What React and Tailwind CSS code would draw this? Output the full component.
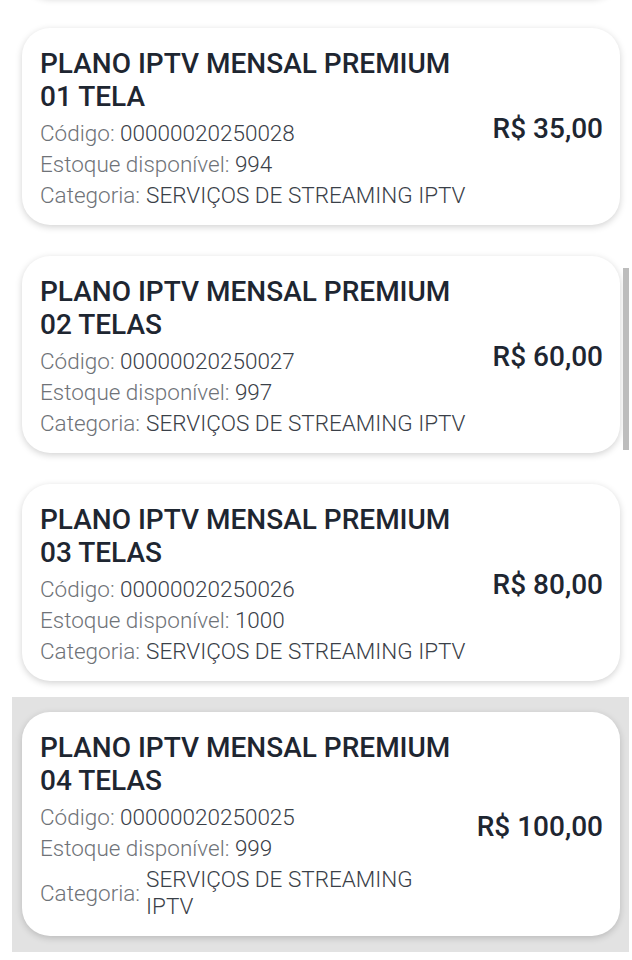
import React from "react";

const planos = [
  { tela: "01 TELA", codigo: "00000020250028", estoque: 994, preco: "R$ 35,00" },
  { tela: "02 TELAS", codigo: "00000020250027", estoque: 997, preco: "R$ 60,00" },
  { tela: "03 TELAS", codigo: "00000020250026", estoque: 1000, preco: "R$ 80,00" },
  { tela: "04 TELAS", codigo: "00000020250025", estoque: 999, preco: "R$ 100,00", ativo: true },
];

function PlanoCard({ plano }) {
  return (
    <div
      className={
        "ml-[12px] mr-[3px] pl-[10px] pr-[9px] pt-[15px] pb-[16px] " +
        (plano.ativo ? "bg-[#e2e2e2]" : "bg-white")
      }
    >
      <div className="flex items-center gap-6 rounded-[28px] bg-white pl-[18px] pr-[17px] pt-[19px] pb-[14px] shadow-[0_2px_7px_rgba(0,0,0,0.18)]">
        <div className="min-w-0 flex-1">
          <h2 className="text-[28px] font-medium leading-[33px] text-[#1e2631]">
            PLANO IPTV MENSAL PREMIUM
            <br />
            {plano.tela}
          </h2>
          <div className="mt-[5px] text-[22.5px] font-light leading-[31px]">
            <p>
              <span className="text-[#6f7378]">Código: </span>
              <span className="text-[#3a4048]">{plano.codigo}</span>
            </p>
            <p>
              <span className="text-[#6f7378]">Estoque disponível: </span>
              <span className="text-[#3a4048]">{plano.estoque}</span>
            </p>
            <div className="flex items-center">
              <span className="shrink-0 text-[#6f7378]">Categoria:</span>
              <span className="ml-[6px] py-[2px] leading-[27px] text-[#3a4048]">
                SERVIÇOS DE STREAMING IPTV
              </span>
            </div>
          </div>
        </div>
        <div className="shrink-0 text-[28px] font-medium text-[#1e2631]">{plano.preco}</div>
      </div>
    </div>
  );
}

export default function App() {
  return (
    <div className="relative h-[960px] overflow-hidden bg-white font-['Roboto',sans-serif]">
      {/* item anterior, só aparece a base */}
      <div className="-mt-[215px] ml-[12px] mr-[3px] pl-[10px] pr-[9px] pt-[15px] pb-[16px]">
        <div className="h-[197px] rounded-[28px] bg-white shadow-[0_2px_7px_rgba(0,0,0,0.18)]" />
      </div>

      {planos.map((plano) => (
        <PlanoCard key={plano.codigo} plano={plano} />
      ))}

      {/* barra de rolagem */}
      <div className="absolute right-[3px] top-[268px] h-[182px] w-[6px] bg-[#bdbdbd]" />
    </div>
  );
}
